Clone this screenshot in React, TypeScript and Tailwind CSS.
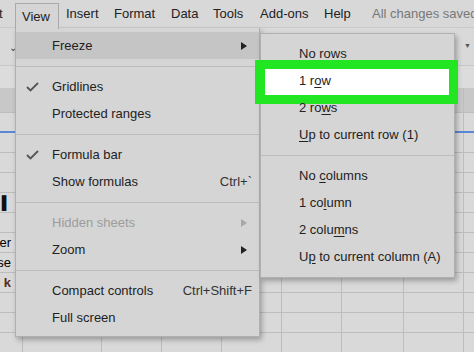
import React from "react";

const font = { fontFamily: '"Liberation Sans", Arial, sans-serif' };

function Check() {
  return (
    <svg width="13" height="10" viewBox="0 0 13 10" className="absolute left-[10px] top-[9px]">
      <polyline points="1,5 4.5,8.5 12,1" fill="none" stroke="#555" strokeWidth="1.8" />
    </svg>
  );
}

function Arrow({ faded }: { faded?: boolean }) {
  return (
    <svg width="6" height="8" viewBox="0 0 6 8" className="absolute right-[12px] top-[10px]">
      <polygon points="0,0 6,4 0,8" fill={faded ? "#a8a8a8" : "#222"} />
    </svg>
  );
}

function Item({
  label,
  check,
  arrow,
  shortcut,
  disabled,
  highlight,
}: {
  label: string;
  check?: boolean;
  arrow?: boolean;
  shortcut?: string;
  disabled?: boolean;
  highlight?: boolean;
}) {
  return (
    <div
      className={`relative h-[27px] flex items-center pl-[36px] pr-[7px] ${
        highlight ? "bg-[#c5c5c5]" : ""
      } ${disabled ? "text-[#9c9c9c]" : "text-[#222]"}`}
    >
      {check && <Check />}
      <span className="flex-1">{label}</span>
      {shortcut && <span className="text-[#333]">{shortcut}</span>}
      {arrow && <Arrow faded={disabled} />}
    </div>
  );
}

function Sep() {
  return (
    <div className="h-[14px] pt-[7px]">
      <div className="h-px bg-[#bcbcbc]" />
    </div>
  );
}

function SubItem({ pre, u, post, green }: { pre: string; u: string; post: string; green?: boolean }) {
  return (
    <div className="relative h-[27px] flex items-center pl-[38px] text-[#222]">
      {green && (
        <div className="absolute left-[-6px] right-[-4px] top-[-7px] bottom-[-10px] border-[9px] border-l-[10px] border-[#22e622] bg-white" />
      )}
      <span className="relative">
        {pre}
        <span className="underline underline-offset-2">{u}</span>
        {post}
      </span>
    </div>
  );
}

const cols = [23, 79, 60, 60, 60, 60, 62, 60, 60];

function Row({ h, cls, blue, text }: { h: number; cls?: string; blue?: boolean; text?: React.ReactNode }) {
  return (
    <div
      className={`flex ${blue ? "border-b-2 border-[#5b87d6]" : "border-b border-[#bdbdbd]"} ${cls ?? ""}`}
      style={{ height: h }}
    >
      {cols.map((w, i) => (
        <div
          key={i}
          className="shrink-0 border-r border-[#bdbdbd] flex items-center justify-end overflow-hidden text-[13px]"
          style={{ width: w }}
        >
          {i === 0 && text ? <span className="pr-[11px] leading-none">{text}</span> : null}
        </div>
      ))}
    </div>
  );
}

export default function App() {
  return (
    <div className="relative w-[474px] h-[352px] overflow-hidden bg-[#d9d9d9] text-[13px]" style={font}>
      {/* menu bar */}
      <div className="h-[28px] flex items-center text-[#222] bg-[#d8d8d8] border-b border-[#cacaca] whitespace-nowrap">
        <div className="w-[15px] shrink-0 h-full flex items-center overflow-hidden">
          <span className="ml-[-4px]">it</span>
        </div>
        <div className="w-[44px] shrink-0 h-[26px] mt-[3px] self-start pl-[6px] flex items-center border border-b-0 border-[#a9a9a9] bg-[#d5d5d5] relative z-20">
          View
        </div>
        <div className="w-[48px] shrink-0 pl-[7px]">Insert</div>
        <div className="w-[57px] shrink-0 pl-[7px]">Format</div>
        <div className="w-[42px] shrink-0 pl-[7px]">Data</div>
        <div className="w-[47px] shrink-0 pl-[7px]">Tools</div>
        <div className="w-[64px] shrink-0 pl-[7px]">Add-ons</div>
        <div className="w-[41px] shrink-0 pl-[7px]">Help</div>
        <div className="shrink-0 pl-[14px] text-[#777]">All changes saved in Drive</div>
      </div>

      {/* toolbar */}
      <div className="h-[37px] relative">
        <span className="absolute left-[9px] top-[12px] text-[#444] text-[10px]">⌄</span>
        <span className="absolute left-[464px] top-[13px] text-[#555] text-[7px]">▼</span>
      </div>
      {/* formula bar */}
      <div className="h-[23px] bg-[#dcdcdc] border-t border-[#c8c8c8]" />
      {/* header band */}
      <Row h={25} cls="bg-[#c8c8c8]" />
      <Row h={20} blue />
      <Row h={20} />
      <Row h={20} />
      <Row h={20} />
      <Row h={20} text={<span className="font-bold text-[#111]">▌</span>} />
      <Row h={20} />
      <Row h={20} text="er" />
      <Row h={20} text="se" />
      <Row h={20} text={<span className="font-bold text-[#5a2a20]">k</span>} />
      <Row h={20} />
      <Row h={20} />
      <Row h={20} />

      {/* main menu */}
      <div className="absolute left-[15px] top-[28px] w-[245px] h-[309px] bg-[#d5d5d5] border border-t-0 border-[#b0b0b0] shadow-[2px_3px_5px_rgba(0,0,0,0.28)] pt-[4px] z-10">
        <Item label="Freeze" arrow highlight />
        <Sep />
        <Item label="Gridlines" check />
        <Item label="Protected ranges" />
        <Sep />
        <Item label="Formula bar" check />
        <Item label="Show formulas" shortcut="Ctrl+`" />
        <Sep />
        <Item label="Hidden sheets" arrow disabled />
        <Item label="Zoom" arrow />
        <Sep />
        <Item label="Compact controls" shortcut="Ctrl+Shift+F" />
        <Item label="Full screen" />
      </div>

      {/* submenu */}
      <div className="absolute left-[260px] top-[33px] w-[195px] h-[245px] bg-[#d5d5d5] border border-[#b0b0b0] shadow-[2px_3px_5px_rgba(0,0,0,0.28)] pt-[6px] z-10">
        <SubItem pre="No " u="r" post="ows" />
        <SubItem pre="1 r" u="o" post="w" green />
        <SubItem pre="2 ro" u="w" post="s" />
        <SubItem pre="" u="U" post="p to current row (1)" />
        <Sep />
        <SubItem pre="No " u="c" post="olumns" />
        <SubItem pre="1 co" u="l" post="umn" />
        <SubItem pre="2 colu" u="m" post="ns" />
        <SubItem pre="U" u="p" post=" to current column (A)" />
      </div>
    </div>
  );
}
